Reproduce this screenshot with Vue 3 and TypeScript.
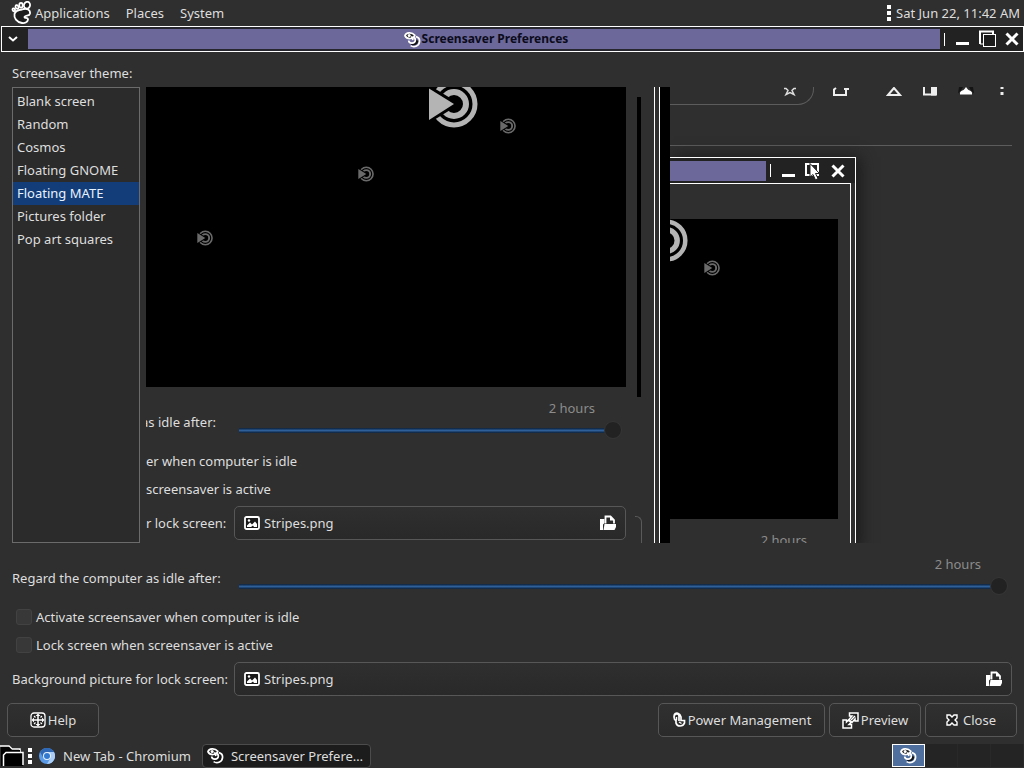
<script setup lang="ts">
import { ref } from 'vue'

const themes: string[] = [
  'Blank screen',
  'Random',
  'Cosmos',
  'Floating GNOME',
  'Floating MATE',
  'Pictures folder',
  'Pop art squares',
]
const selected = ref<string>('Floating MATE')
const idle = ref<number>(120)
const activate = ref<boolean>(false)
const lock = ref<boolean>(false)
</script>

<template>
  <div class="desktop">
    <svg class="defs" aria-hidden="true">
      <defs>
        <symbol id="mate" viewBox="0 0 50 50">
          <circle cx="26" cy="25" r="21" fill="none" stroke="currentColor" stroke-width="5" />
          <circle cx="26" cy="25" r="12" fill="none" stroke="currentColor" stroke-width="6" />
          <path d="M-4 3 L-4 47 L1 44 L32 25 L1 6Z" fill="#000" />
          <path d="M1 9.500V41L26 25Z" fill="currentColor" />
        </symbol>
        <symbol id="saver" viewBox="0 0 18 18">
          <path d="M7 15.500C11 18 16.500 15.500 16.500 10.500C16.500 8 14.500 6.500 12.500 6" fill="none" stroke="#fff" stroke-width="1.800" />
          <path d="M7.500 14.500C10 16 15 14.500 15 10.500L12.500 8.500C13 11.500 10.500 13.500 7.500 12.500Z" fill="#111" />
          <path d="M5 10C5 13.500 11.500 14 12 10C12.200 8 11 7 9.500 6.500" fill="none" stroke="#fff" stroke-width="1.800" />
          <path d="M1 5C2 1.500 8 .5 11.500 4.500C10 8.500 3.500 9.500 1 5Z" fill="#222" stroke="#fff" stroke-width="1.800" />
          <circle cx="5.500" cy="4.800" r="1.600" fill="#fff" />
          <path d="M8 5.500L9.500 9.500" stroke="#fff" stroke-width="1.800" />
        </symbol>
        <symbol id="image" viewBox="0 0 16 14">
          <rect x="1" y="1" width="14" height="12" rx="1.500" fill="#1a1a1a" stroke="#fff" stroke-width="1.800" />
          <path d="M3 11V9.500L6 6.500 8 8.500 11 5.500 13 8V11H10L9 9.500 7 11Z" fill="#fff" />
          <circle cx="5" cy="4.500" r="1.200" fill="#fff" />
        </symbol>
        <symbol id="open" viewBox="0 0 16 16">
          <path d="M0 4H4.500V8L3 9.500V15H0Z" fill="#fff" />
          <path d="M5.500 8.500V1.500H10.500L14 5V8.500" fill="none" stroke="#fff" stroke-width="1.800" />
          <path d="M10 1L14.500 5.500H10Z" fill="#fff" />
          <path d="M4.500 9H16V12L14.500 15H3.500Z" fill="#fff" />
        </symbol>
        <symbol id="cross" viewBox="0 0 14 14">
          <path d="M1.500 1.500L12.500 12.500M12.500 1.500L1.500 12.500" stroke="#fff" stroke-width="3" />
        </symbol>
      </defs>
    </svg>

    <header class="panel">
      <nav class="menus">
        <a href="#" class="apps">
          <svg width="22" height="24" viewBox="0 0 22 24">
            <g fill="#1c1c1c" stroke="#fff" stroke-width="1.800">
              <path d="M11 8.500C16 6.500 19.500 9 19 12.500C18.500 15.500 14.500 14 13.500 16C13.200 17.500 17 16 17 18.500C16.500 21.500 13.500 22.500 11 22C5.500 21 2.800 17 3.500 13C4 10.500 7 9 11 8.500Z" />
              <ellipse cx="16" cy="4.200" rx="3" ry="3.400" transform="rotate(18 16 4.200)" />
              <ellipse cx="10" cy="4.200" rx="1.700" ry="2.400" />
              <ellipse cx="6" cy="6" rx="1.400" ry="1.900" transform="rotate(-20 6 6)" />
              <ellipse cx="2.800" cy="8.800" rx="1.200" ry="1.500" transform="rotate(-35 2.800 8.800)" />
            </g>
          </svg>
          Applications
        </a>
        <a href="#">Places</a>
        <a href="#">System</a>
      </nav>
      <div class="clock">
        <span class="grip"><i></i><i></i><i></i></span>
        <time>Sat Jun 22, 11:42 AM</time>
      </div>
    </header>

    <div class="titlebar">
      <button class="wm menu" aria-label="Window menu">
        <svg width="10" height="6" viewBox="0 0 10 6"><path d="M1 1L5 4.500 9 1" fill="none" stroke="#fff" stroke-width="2" /></svg>
      </button>
      <h1 class="title">
        <svg width="17" height="17"><use href="#saver" /></svg>
        Screensaver Preferences
      </h1>
      <div class="wmgroup">
        <span class="sep"></span>
        <button class="wm" aria-label="Minimize"><svg width="14" height="18" viewBox="0 0 14 18"><path d="M1 13.500H14" stroke="#fff" stroke-width="3" /></svg></button>
        <button class="wm restore" aria-label="Restore">
          <svg width="18" height="18" viewBox="0 0 18 18">
            <path d="M1 14V1.500H14V4" fill="none" stroke="#fff" stroke-width="2" />
            <path d="M1 14H4" stroke="#fff" />
            <rect x="4.500" y="4.500" width="12" height="12" fill="#1c1c1c" stroke="#fff" />
          </svg>
        </button>
        <button class="wm" aria-label="Close window"><svg width="14" height="14"><use href="#cross" /></svg></button>
      </div>
    </div>

    <main class="prefs">
      <h2 class="heading">Screensaver theme:</h2>
      <div class="chooser">
        <ul class="themes" role="listbox" aria-label="Screensaver theme">
          <li
            v-for="t in themes"
            :key="t"
            role="option"
            :aria-selected="t === selected"
            :class="{ on: t === selected }"
            @click="selected = t"
          >{{ t }}</li>
        </ul>

        <section class="preview" aria-label="Preview">
          <div class="trail">
            <div class="space">
              <svg class="logo big" viewBox="0 0 50 50"><use href="#mate" /></svg>
              <svg class="logo small s1" viewBox="0 0 50 50"><use href="#mate" /></svg>
              <svg class="logo small s2" viewBox="0 0 50 50"><use href="#mate" /></svg>
              <svg class="logo small s3" viewBox="0 0 50 50"><use href="#mate" /></svg>
            </div>
            <div class="form">
              <div class="row idle">
                <span class="cut cut-idle">as idle after:</span>
                <div class="scale">
                  <output>2 hours</output>
                  <input type="range" min="1" max="120" value="120" aria-label="Idle time, preview" />
                </div>
              </div>
              <div class="row check"><span>er when computer is idle</span></div>
              <div class="row check"><span>screensaver is active</span></div>
              <div class="row file">
                <span class="cut-file">r lock screen:</span>
                <button class="chooser-button">
                  <svg width="16" height="14"><use href="#image" /></svg>
                  <span>Stripes.png</span>
                  <svg width="16" height="16"><use href="#open" /></svg>
                </button>
              </div>
            </div>
          </div>
          <div class="gutter">
            <span class="bar"></span>
            <span class="corner"></span>
          </div>
          <div class="frame"></div>
          <div class="shade"></div>

          <div class="behind">
            <div class="browser">
              <div class="omnibox">
                <svg width="14" height="10" viewBox="0 0 14 10"><path d="M1 1.500H3L5 3.500 3 7.500 7 5.500 11 7.500 9 3.500 11 1.500H13" fill="none" stroke="#ddd" stroke-width="1.500" /></svg>
              </div>
              <div class="tools">
                <svg width="18" height="10" viewBox="0 0 18 10"><path d="M4 1L2 2.500V8H14V2M12 2H17" fill="none" stroke="#eee" stroke-width="2" /></svg>
                <svg class="apart" width="16" height="10" viewBox="0 0 16 10"><path d="M8 1L2 8H14Z" fill="none" stroke="#eee" stroke-width="2" /></svg>
                <svg width="16" height="10" viewBox="0 0 16 10"><path d="M2 0V7.500H14" fill="none" stroke="#eee" stroke-width="2" /><path d="M9 0H15V8.500H9Z" fill="#eee" /></svg>
                <svg width="16" height="10" viewBox="0 0 16 10"><path d="M1 0H5L3 3.500 0 6.500ZM11 0H15L16 6.500 13 3.500Z" fill="#141414" /><path d="M2 7.500V5.500C3 3.500 5.500 3.500 6.500 2L8 0 9.500 2C10.500 3.500 13 3.500 14 5.500V7.500Z" fill="#fff" /></svg>
                <svg width="16" height="10" viewBox="0 0 16 10"><path d="M6.500 0H9.500V2H6.500ZM6.500 5H9.500V8H6.500Z" fill="#eee" /></svg>
              </div>
            </div>
            <div class="window">
              <div class="window-title">
                <span class="fill"></span>
                <span class="sep"></span>
                <svg width="14" height="18" viewBox="0 0 14 18"><path d="M1 13.500H14" stroke="#fff" stroke-width="3" /></svg>
                <svg class="restore" width="18" height="20" viewBox="0 0 18 20">
                  <rect x="1" y="3" width="12" height="11" fill="none" stroke="#fff" stroke-width="2" />
                  <path d="M5 2.500V16L8 13.500 10.500 19 13 17.500 10.500 12.500H14.500Z" fill="#fff" stroke="#222" />
                </svg>
                <svg width="14" height="14"><use href="#cross" /></svg>
              </div>
              <div class="window-body">
                <div class="space">
                  <svg class="logo ring" viewBox="0 0 50 50"><use href="#mate" /></svg>
                  <svg class="logo small s4" viewBox="0 0 50 50"><use href="#mate" /></svg>
                </div>
                <output>2 hours</output>
              </div>
            </div>
          </div>
        </section>
      </div>

      <form class="form" @submit.prevent>
        <div class="row idle">
          <label class="l-idle" for="idle">Regard the computer as idle after:</label>
          <div class="scale">
            <output for="idle">2 hours</output>
            <input id="idle" v-model.number="idle" type="range" min="1" max="120" />
          </div>
        </div>
        <div class="row check inset">
          <input id="activate" v-model="activate" type="checkbox" />
          <label for="activate">Activate screensaver when computer is idle</label>
        </div>
        <div class="row check inset">
          <input id="lock" v-model="lock" type="checkbox" />
          <label for="lock">Lock screen when screensaver is active</label>
        </div>
        <div class="row file">
          <label class="l-file" for="picture">Background picture for lock screen:</label>
          <button id="picture" type="button" class="chooser-button">
            <svg width="16" height="14"><use href="#image" /></svg>
            <span>Stripes.png</span>
            <svg width="16" height="16"><use href="#open" /></svg>
          </button>
        </div>
      </form>
    </main>

    <div class="actions">
      <button class="action">
        <svg width="16" height="16" viewBox="0 0 16 16">
          <rect x="1" y="1" width="14" height="14" rx="3" fill="#222" stroke="#fff" stroke-width="1.300" />
          <path d="M8 3V13M3 8H13" stroke="#fff" stroke-width="1.500" />
          <path d="M5.500 4L8 1.500 10.500 4ZM5.500 12L8 14.500 10.500 12ZM4 5.500L1.500 8 4 10.500ZM12 5.500L14.500 8 12 10.500Z" fill="#fff" />
          <path d="M4 4L5.500 5.500M12 4L10.500 5.500M4 12L5.500 10.500M12 12L10.500 10.500" stroke="#fff" stroke-width="1.200" />
        </svg>
        Help
      </button>
      <span class="spring"></span>
      <button class="action power">
        <svg width="14" height="16" viewBox="0 0 14 16">
          <path d="M7 9V4C7 1 2 1 2 5C2 7 3 8 4 8.500V11C5 15 11 15 12.500 11V8.500H9V5C8 1 4 0 2 3" fill="none" stroke="#fff" stroke-width="1.700" />
          <path d="M4.500 5V8M7 10L9.500 11.500" stroke="#fff" stroke-width="1.400" />
        </svg>
        Power Management
      </button>
      <button class="action">
        <svg width="17" height="17" viewBox="0 0 17 17">
          <path d="M7.500 1H16V9H13V7L10 10.500 7 7.500 10 4H7.500Z" fill="#222" stroke="#fff" stroke-width="1.500" />
          <path d="M1 8H4.500V10L6.500 8 9 10.500 7 12.500H9.500V16H1Z" fill="#222" stroke="#fff" stroke-width="1.500" />
          <path d="M9 8L13 4" stroke="#fff" stroke-width="1.500" />
        </svg>
        Preview
      </button>
      <button class="action close">
        <svg width="12" height="12" viewBox="0 0 12 12"><path d="M1 1H4L6 3 8 1H11V4L9 6 11 8V11H8L6 9 4 11H1V8L3 6 1 4Z" fill="#222" stroke="#fff" stroke-width="1.400" /></svg>
        Close
      </button>
    </div>

    <footer class="taskbar">
      <button class="show" aria-label="Show desktop">
        <svg width="24" height="22" viewBox="0 0 24 22">
          <path d="M0 1H9L12 4H20V8" fill="#000" stroke="#fff" stroke-width="1.500" />
          <path d="M1 2V21H23V8H20V5H12L9 2Z" fill="#000" />
          <path d="M3.500 21V10L6 7.500H23V20" fill="none" stroke="#fff" stroke-width="1.500" />
        </svg>
      </button>
      <span class="grip"><i></i><i></i><i></i></span>
      <button class="task">
        <svg width="16" height="16" viewBox="0 0 16 16">
          <circle cx="8" cy="8" r="8" fill="#5a9ae6" />
          <path d="M8 4H15A8 8 0 0 1 8 16L11.500 10Z" fill="#a9cdf7" />
          <path d="M1 4A8 8 0 0 1 15 4H8L4.500 10Z" fill="#2f68b5" />
          <circle cx="8" cy="8" r="4" fill="#e8f1fc" />
          <circle cx="8" cy="8" r="3" fill="#3479d0" />
        </svg>
        New Tab - Chromium
      </button>
      <button class="task active">
        <svg width="17" height="17"><use href="#saver" /></svg>
        Screensaver Prefere…
      </button>
      <span class="spring"></span>
      <button class="workspace current" aria-label="Workspace 1"><svg width="17" height="17"><use href="#saver" /></svg></button>
      <button class="workspace" aria-label="Workspace 2"></button>
      <button class="workspace" aria-label="Workspace 3"></button>
      <button class="workspace" aria-label="Workspace 4"></button>
    </footer>
  </div>
</template>

<style>
body {
  margin: 0;
  background: #2f2f2f;
}
</style>

<style scoped>
.desktop {
  display: flex;
  flex-direction: column;
  min-height: 100vh;
  background: #2f2f2f;
  color: #dedede;
  font: 13px/20px "Noto Sans", "Open Sans", sans-serif;
}
.desktop * {
  box-sizing: border-box;
}
svg {
  display: block;
  flex: none;
}
.defs {
  position: absolute;
  width: 0;
  height: 0;
}
button {
  margin: 0;
  padding: 0;
  border: 0;
  background: none;
  color: inherit;
  font: inherit;
  white-space: nowrap;
}
a {
  color: inherit;
  text-decoration: none;
}
.spring {
  flex: 1;
}

.panel {
  display: flex;
  justify-content: space-between;
  align-items: center;
  height: 26px;
  padding: 0 4px 0 11px;
}
.menus,
.clock,
.apps {
  display: flex;
  align-items: center;
}
.menus {
  gap: 16px;
}
.apps {
  gap: 2px;
}
.clock {
  gap: 5px;
}
.grip {
  display: flex;
  flex-direction: column;
  gap: 2px;
}
.grip i {
  width: 4px;
  height: 4px;
  background: #fff;
}

.titlebar {
  display: flex;
  align-items: center;
  height: 26px;
  margin: 0 0 0 1px;
  border: 1px solid #fff;
  background: #272730;
}
.wm {
  display: flex;
  align-items: center;
  justify-content: center;
}
.menu {
  width: 26px;
  height: 24px;
  padding-right: 5px;
  background: #222;
}
.title {
  flex: 1;
  display: flex;
  align-items: center;
  justify-content: center;
  gap: 1px;
  height: 20px;
  margin: 0;
  padding-left: 4px;
  background: #6c6899;
  color: #0b0b1c;
  font-size: 12px;
  line-height: 20px;
}
.wmgroup {
  display: flex;
  align-items: center;
  gap: 10px;
  height: 24px;
  padding: 0 4px;
  background: #222;
}
.restore {
  margin-right: -2px;
}
.sep {
  width: 1px;
  height: 13px;
  background: #fff;
}

.prefs {
  flex: 1;
  display: flex;
  flex-direction: column;
  padding: 11px 12px 1px;
}
.heading {
  margin: 0 0 4px;
  font-size: 13px;
  font-weight: 400;
  line-height: 20px;
}
.chooser {
  flex: 1;
  display: flex;
  gap: 6px;
  min-height: 456px;
}
.themes {
  flex: none;
  width: 128px;
  margin: 0;
  padding: 2px 0;
  border: 1px solid #6b6b6b;
  background: #2b2b2b;
  list-style: none;
}
.themes li {
  padding: 0 4px;
  line-height: 23px;
  white-space: nowrap;
}
.themes .on {
  background: #123d78;
  color: #e8f2ff;
}

.preview {
  flex: 1;
  display: flex;
  height: 456px;
  overflow: hidden;
}
.trail {
  flex: none;
  width: 480px;
}
.space {
  position: relative;
  height: 300px;
  overflow: hidden;
  background: #000;
}
.logo {
  position: absolute;
  color: #b4b4b4;
  overflow: hidden;
}
.big {
  left: 282px;
  top: -8px;
  width: 50px;
  height: 50px;
}
.small {
  width: 16px;
  height: 16px;
  color: #6a6a6a;
}
.s1 {
  left: 354px;
  top: 31px;
}
.s2 {
  left: 212px;
  top: 79px;
}
.s3 {
  left: 51px;
  top: 143px;
}
.ring {
  left: -27px;
  top: -1px;
  width: 45px;
  height: 45px;
}
.s4 {
  left: 34px;
  top: 41px;
}
.cut {
  flex: none;
  display: flex;
  justify-content: flex-end;
  overflow: hidden;
  white-space: nowrap;
}
.cut-idle {
  width: 70px;
  margin-right: 23px;
}
.cut-file {
  flex: none;
  width: 88px;
}
.gutter {
  flex: none;
  display: flex;
  flex-direction: column;
  justify-content: space-between;
  width: 28px;
  padding: 10px 12px 0 9px;
}
.bar {
  align-self: center;
  width: 4px;
  height: 300px;
  background: #000;
}
.corner {
  height: 27px;
  border: solid #5a5a5a;
  border-width: 1px 1px 0 0;
  border-radius: 0 6px 0 0;
}
.frame {
  flex: none;
  width: 6px;
  border: solid #fff;
  border-width: 0 1px;
}
.shade {
  flex: none;
  width: 10px;
  background: #000;
}
.behind {
  flex: 1;
  display: flex;
  flex-direction: column;
  gap: 11px;
  overflow: hidden;
}
.browser {
  flex: none;
  display: flex;
  height: 59px;
  border-bottom: 1px solid #5c5c5c;
}
.omnibox {
  display: flex;
  justify-content: flex-end;
  width: 144px;
  height: 18px;
  padding-right: 16px;
  border: solid #5c5c5c;
  border-width: 0 1px 1px 0;
  border-radius: 0 0 16px 0;
}
.tools {
  display: flex;
  gap: 20px;
  height: 18px;
  padding-left: 18px;
}
.apart {
  margin-left: 16px;
}
.window {
  flex: 1;
  display: flex;
  flex-direction: column;
  width: 186px;
  border: solid #fff;
  border-width: 1px 1px 0 0;
  box-shadow: 4px 0 14px #1a1a1a;
  background: #2f2f2f;
}
.window-title {
  display: flex;
  align-items: center;
  gap: 10px;
  height: 25px;
  padding-right: 10px;
  background: #222;
}
.window-title .fill {
  flex: 1;
  height: 20px;
  margin-right: -6px;
  background: #6c6899;
}
.window-body {
  flex: 1;
  margin-right: 4px;
  padding: 35px 12px 0 0;
  border: solid #fff;
  border-width: 1px 1px 0 0;
}
.window-body output {
  display: block;
  padding: 11px 31px 0 0;
  color: #8c8c8c;
  text-align: right;
}

.form {
  padding-top: 10px;
}
.row {
  display: flex;
  align-items: center;
}
.idle {
  height: 50px;
}
.l-idle {
  flex: none;
  width: 227px;
}
.l-file {
  flex: none;
  width: 222px;
}
.scale {
  flex: 1;
  display: flex;
  flex-direction: column;
  align-self: flex-start;
  padding-right: 4px;
}
.scale output {
  padding-right: 27px;
  color: #8c8c8c;
  line-height: 22px;
  text-align: right;
}
input[type="range"] {
  appearance: none;
  width: 100%;
  height: 22px;
  margin: 0;
  background: linear-gradient(#0c1f38, #2f5f98 50%, #0c1f38) left center / calc(100% - 16px) 5px no-repeat;
}
input[type="range"]::-webkit-slider-thumb {
  appearance: none;
  width: 18px;
  height: 18px;
  border: 1px solid #363636;
  border-radius: 50%;
  background: #222;
}
.check {
  height: 28px;
  gap: 4px;
}
.inset {
  padding-left: 4px;
}
input[type="checkbox"] {
  appearance: none;
  width: 16px;
  height: 16px;
  margin: 0;
  border: 1px solid #424242;
  border-radius: 3px;
  background: #383838;
}
input[type="checkbox"]:checked {
  background: #2f5f98;
}
.file {
  margin-top: 3px;
}
.chooser-button {
  flex: 1;
  display: flex;
  align-items: center;
  gap: 4px;
  height: 34px;
  padding: 0 9px;
  border: 1px solid #575757;
  border-radius: 5px;
  background: linear-gradient(#2f2f2f, #292929);
  text-align: left;
}
.chooser-button span {
  flex: 1;
}

.actions {
  display: flex;
  gap: 4px;
  padding: 6px 7px;
}
.action {
  display: flex;
  align-items: center;
  justify-content: center;
  gap: 2px;
  width: 92px;
  height: 34px;
  border: 1px solid #575757;
  border-radius: 5px;
  background: linear-gradient(#303030, #2a2a2a);
}
.power {
  width: 167px;
}
.close {
  gap: 5px;
}

.taskbar {
  display: flex;
  align-items: center;
  height: 25px;
}
.show {
  margin-right: 4px;
}
.task {
  display: flex;
  align-items: center;
  gap: 8px;
  height: 24px;
  margin-right: 7px;
  padding: 0 4px 0 7px;
}
.active {
  gap: 7px;
  padding: 0 7px 0 4px;
  border: 1px solid #4c4c4c;
  border-radius: 4px;
  background: #1c1c1c;
}
.workspace {
  display: flex;
  align-items: center;
  justify-content: center;
  width: 33px;
  height: 23px;
  border-right: 1px solid #292929;
  background: #242424;
}
.current {
  border: 1px solid #fff;
  background: #4f6f9f;
}
</style>
